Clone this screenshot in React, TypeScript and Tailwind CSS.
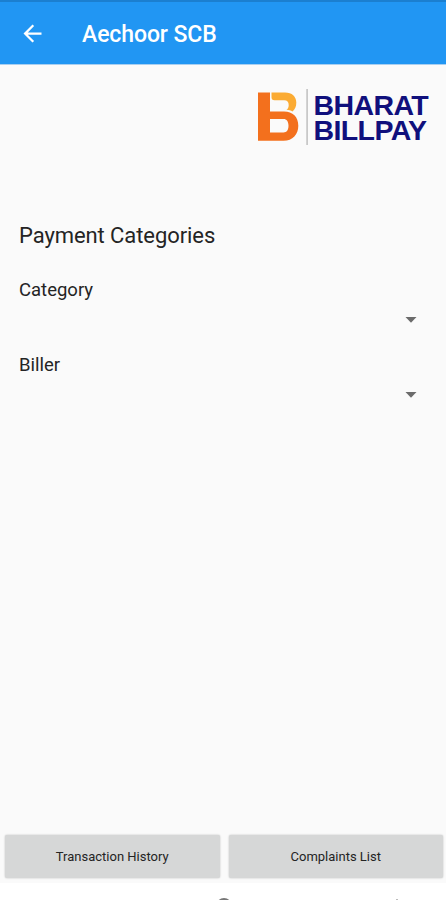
interface SpinnerProps {
  label: string;
}

function BillPayLogo() {
  return (
    <div className="flex h-[60px] w-[188px] items-start">
      {/* B mark */}
      <svg width="52" height="60" viewBox="0 0 52 60" className="shrink-0">
        <path
          fill="#fbab33"
          d="M13.500 5.500H27c7 0 11.300 4 11.300 10 0 4.200-1.300 6.900-3.800 8.900-1.700-.8-3.500-1.400-6-1.600 1.600-1.200 2.200-2.700 2.200-4.600 0-3-1.500-4.900-4.500-4.900H16.500c-2 0-3-1-3-3z"
        />
        <path
          fill="#f3701d"
          fillRule="evenodd"
          d="M0 5.500h12v19H26c8.800 0 14.300 5.400 14.300 14.200S34.800 53.700 25.500 53.700H0zM12 32v13.500H25.500c3.200 0 5-2.600 5-6.700s-1.800-6.800-5-6.800z"
        />
        <rect x="48.300" y="2" width="1.600" height="56" fill="#c2c2c2" />
      </svg>
      <div className="ml-[3.500px] mt-[5.500px] font-['Liberation_Sans',Arial,sans-serif] text-[28.500px] leading-[25px] font-bold tracking-[-0.600px] whitespace-nowrap text-[#10107c]">
        BHARAT
        <br />
        BILLPAY
      </div>
    </div>
  );
}

function Spinner({ label }: SpinnerProps) {
  return (
    <div className="h-[75px]">
      <div className="text-[18.500px] leading-6">{label}</div>
      <button aria-label={label} className="flex h-9 w-full items-center justify-end pr-2.5">
        <svg width="12" height="6" viewBox="0 0 12 6" fill="#6b6b6b">
          <path d="M.500 0h11L6 5.700z" />
        </svg>
      </button>
    </div>
  );
}

export default function App() {
  return (
    <div className="flex h-[900px] w-full flex-col overflow-hidden bg-[#fafafa] font-['Roboto',sans-serif] text-[#242424]">
      {/* App bar */}
      <header className="flex h-[65px] shrink-0 items-center border-t-2 border-b border-t-[#1b7fd0] border-b-[#a9cff0] bg-[#2196f3] pl-[19px] text-white">
        <button aria-label="Back">
          <svg width="27" height="27" viewBox="0 0 24 24" fill="currentColor">
            <path d="M20 11H7.830l5.590-5.590L12 4l-8 8 8 8 1.410-1.410L7.830 13H20z" />
          </svg>
        </button>
        <h1 className="ml-[36px] pt-1 text-[23px] leading-7 font-medium tracking-[-0.100px]">Aechoor SCB</h1>
      </header>

      <main className="flex-1 pt-[22px]">
        <div className="flex justify-end">
          <BillPayLogo />
        </div>

        <div className="px-[19px] pt-[75px]">
          <h2 className="mb-[28px] text-[22px] leading-7 tracking-[-0.080px]">Payment Categories</h2>
          <Spinner label="Category" />
          <Spinner label="Biller" />
        </div>
      </main>

      <div className="flex gap-[9px] pr-[3px] pb-[5px] pl-[5px]">
        <button className="h-[43px] flex-1 rounded-xs bg-[#d6d7d7] text-[13px] shadow-[0_0_2px_#bbb]">
          Transaction History
        </button>
        <button className="h-[43px] flex-1 rounded-xs bg-[#d6d7d7] text-[13px] shadow-[0_0_2px_#bbb]">
          Complaints List
        </button>
      </div>

      {/* System navigation, mostly below the fold */}
      <div className="flex h-[17px] shrink-0 items-start overflow-hidden bg-white pt-[15px]">
        <div className="ml-[216px] size-4 shrink-0 rounded-full border-2 border-[#777]" />
        <div className="ml-[164px] mt-px h-px w-[2px] bg-[#bbb]" />
      </div>
    </div>
  );
}
